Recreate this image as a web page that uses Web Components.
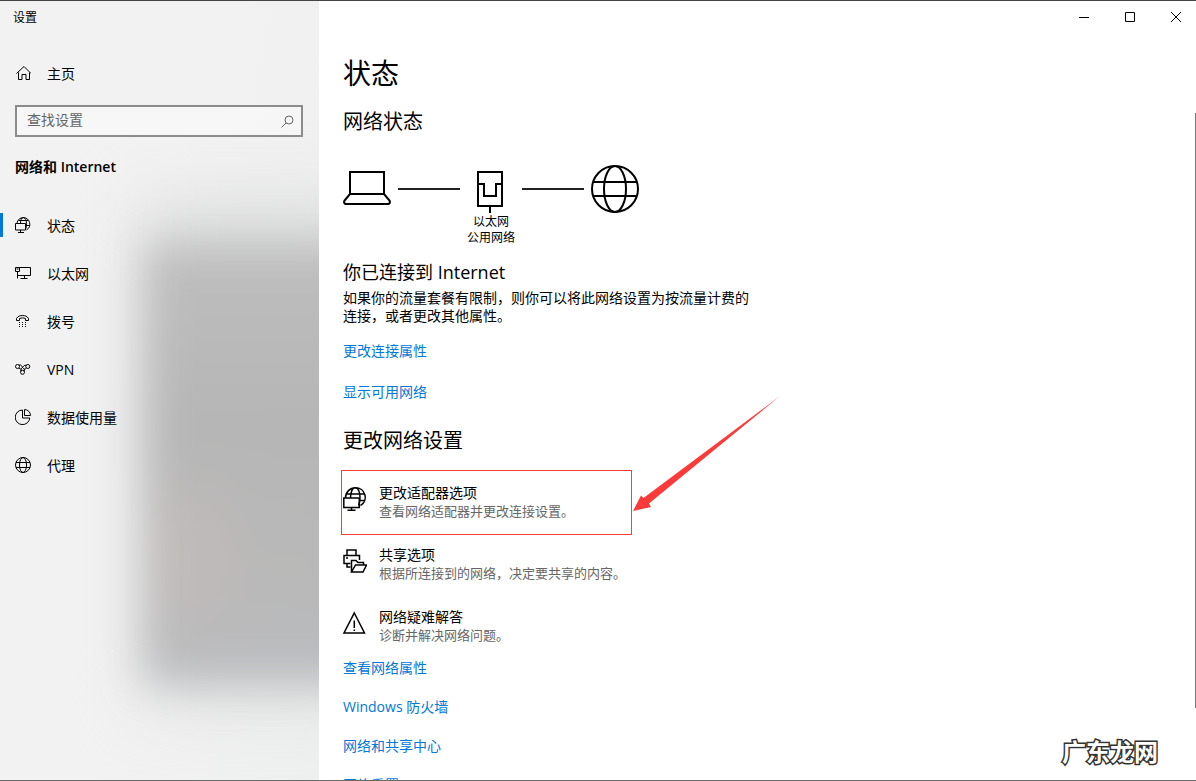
<!DOCTYPE html>
<html lang="zh-CN">
<head>
  <meta charset="UTF-8">
  <meta name="viewport" content="width=device-width, initial-scale=1.0">
  <title>设置</title>
  <style>
    html, body {
      margin: 0;
      height: 100%;
    }
    body {
      font-family: "Open Sans", "Noto Sans CJK SC", sans-serif;
      font-size: 14px;
      line-height: 20px;
      color: #000;
      background: #fff;
      overflow: hidden;
    }
  </style>
</head>
<body>
  <settings-window>
    <side-bar slot="side">
      <span slot="title">设置</span>
      <nav-item slot="home" icon="home">主页</nav-item>
      <search-box slot="search" label="查找设置"></search-box>
      <span slot="heading">网络和 Internet</span>
      <nav-item icon="status" active>状态</nav-item>
      <nav-item icon="ethernet">以太网</nav-item>
      <nav-item icon="dialup">拨号</nav-item>
      <nav-item icon="vpn">VPN</nav-item>
      <nav-item icon="usage">数据使用量</nav-item>
      <nav-item icon="globe">代理</nav-item>
    </side-bar>
    <status-page></status-page>
  </settings-window>

  <script>
    const icons = {
      home: [16, '<path d="M1.500 8.500 9 1.500l7 7M3.500 7.500v7h3.500v-5h4v5h3.500v-7"/>'],
      status: [16, '<path d="M2 6C2.500 3 5 .6 8.300.6a6.600 6.600 0 0 1 3.200 12.300M3.500 3.500h9.800M10.500 8.500h4.300M5.500 6C5.500 3 6.500.6 8.300.6S11.500 3 11.500 6.500c0 2.500-.3 4-1 6"/><path d="M.5 6.500h10v6.500H.5zM5.500 13v2.500M3 15.500h6"/>'],
      ethernet: [16, '<path d="M4.500 2.500h11v8H2.500M.5 2.500h4v4h-4zM1.500 4h2M2.500 6.500v7M9.500 10.500v3M5.500 13.500h7"/>'],
      dialup: [16, '<path d="M1.500 7.500v-2C3 3 5 2.500 7.500 2.500S12 3 13.500 5.500v2h-3v-2c-2-.8-4-.8-6 0v2z"/><path d="M4 9.500h1M7 9.500h1M10 9.500h1M4 11.500h1M7 11.500h1M10 11.500h1M4 13.500h1M7 13.500h1M10 13.500h1"/>'],
      vpn: [16, '<circle cx="2.500" cy="5.500" r="2"/><circle cx="12.800" cy="5.500" r="2"/><circle cx="7.500" cy="11.300" r="2"/><path d="M4 4.200c1.500-.8 2.300 0 3 1.300S8.500 8 9.500 8s1.800-.5 2-1M4 7c1 1.500 2 1 3 0s2-3.200 4.300-2.800M5.700 10.500c-.4-1.500.3-2 1.300-3M9.300 10.500c.3-1 .2-1.500 0-2.500"/>'],
      usage: [16, '<path d="M7.500 1A7.300 7.300 0 1 0 14.800 9H7.500z"/><path d="M9.500.5v6h6a6 6 0 0 0-6-6z"/>'],
      globe: [16, '<circle cx="8" cy="8" r="7.500"/><ellipse cx="8" cy="8" rx="3.500" ry="7.500"/><path d="M1 5.500h14M1 10.500h14"/>'],
      search: [13, '<circle cx="8" cy="5" r="4"/><path d="M5 8 .5 12.500"/>'],
      adapter: [24, '<path d="M2.500 11C2.500 5 7 .8 12.500.8a9.500 9.500 0 0 1 5 17.700M3.500 7h18M16 13.500h5.500M7.500 11C7.500 5 9.500.8 12.300.8S17 5 17 10c0 3.500-.3 6-1.500 8.500"/><path d="M.8 11h15.500v9.500H.8zM8.500 20.500v3M4.500 23.200h8"/>'],
      share: [24, '<path d="M4 6.500V1h9v5.500M7.500 14.500H1v-8h15.500V11M4 14.500V18h3.500M3 9h2"/><path d="M8.500 23V11.500H13l2 2h5.500V16M8.500 23l4-7h11l-3.500 7z"/>'],
      warning: [24, '<path d="M11.300 2 21.500 22H1z"/><path d="M11.300 9.500V17M11.300 18.500V20"/>'],
      laptop: [48, '<path d="M7 7h34v22H7zM7 29l-5.500 6.500c-1 2 0 3.500 1.500 3.500h42c1.500 0 2.500-1.500 1.500-3.500L41 29"/>'],
      port: [48, '<path d="M11 7h24v34H11zM11 19h6v12h12V19h6M23 41v7"/>'],
      world: [48, '<circle cx="24" cy="24" r="23"/><ellipse cx="24" cy="24" rx="11" ry="23"/><path d="M2 17h44M2 31h44"/>'],
      minimize: [10, '<path d="M0 5.500h10"/>'],
      maximize: [10, '<path d="M.5.5h9v9h-9z"/>'],
      close: [10, '<path d="m0 0 10 10M10 0 0 10"/>']
    };

    function icon(name, stroke = 1) {
      const [size, body] = icons[name];
      return `<svg width="${size}" height="${size}" viewBox="0 0 ${size} ${size}" fill="none"
        stroke="currentColor" stroke-width="${stroke}" aria-hidden="true">${body}</svg>`;
    }

    class SettingsWindow extends HTMLElement {
      connectedCallback() {
        this.attachShadow({ mode: 'open' });
        this.shadowRoot.innerHTML = `
          <style>
            :host {
              display: flex;
              position: relative;
              box-sizing: border-box;
              height: 100vh;
              border-top: 1px solid #444;
              border-bottom: 1px solid #6a6a6a;
              overflow: hidden;
            }
            .content {
              flex: 1;
              min-width: 0;
              display: flex;
              flex-direction: column;
            }
            .thumb {
              position: absolute;
              right: 0;
              top: 112px;
              bottom: 72px;
              width: 1px;
              background: #777;
            }
            .mark {
              position: absolute;
              right: 38px;
              bottom: 12px;
              font-size: 24px;
              line-height: 32px;
              font-weight: 700;
              color: #fff;
              -webkit-text-stroke: 3px #333;
              paint-order: stroke fill;
              stroke-linejoin: round;
            }
          </style>
          <slot name="side"></slot>
          <div class="content">
            <caption-bar></caption-bar>
            <slot></slot>
          </div>
          <div class="thumb"></div>
          <div class="mark">广东龙网</div>
        `;
      }
    }

    class CaptionBar extends HTMLElement {
      connectedCallback() {
        this.attachShadow({ mode: 'open' });
        this.shadowRoot.innerHTML = `
          <style>
            :host {
              display: flex;
              justify-content: flex-end;
              height: 32px;
              flex: none;
            }
            button {
              display: flex;
              align-items: center;
              justify-content: center;
              width: 46px;
              padding: 0 0 0 6px;
              border: 0;
              background: none;
              color: #000;
            }
            button:hover { background: #e5e5e5; }
          </style>
          <button aria-label="最小化">${icon('minimize')}</button>
          <button aria-label="最大化">${icon('maximize')}</button>
          <button aria-label="关闭">${icon('close')}</button>
        `;
      }
    }

    class SideBar extends HTMLElement {
      connectedCallback() {
        this.attachShadow({ mode: 'open' });
        this.shadowRoot.innerHTML = `
          <style>
            :host {
              display: block;
              position: relative;
              z-index: 0;
              flex: none;
              width: 319px;
              overflow: hidden;
              background: linear-gradient(100deg, #f2f2f2 50%, #eeefef);
            }
            /* dark window showing through the acrylic */
            :host::before {
              content: '';
              position: absolute;
              z-index: -1;
              left: 146px;
              right: -80px;
              top: 244px;
              bottom: 98px;
              filter: blur(20px);
              background:
                radial-gradient(80px 110px at 40px 310px, #c1bbb9, transparent),
                linear-gradient(#bebebe, #b6b6b6 40%, #b9b9b9 80%, #babcc0);
            }
            :host::after {
              content: '';
              position: absolute;
              z-index: -2;
              left: 140px;
              right: -60px;
              top: 200px;
              bottom: 80px;
              filter: blur(32px);
              background: #dcdddd;
            }
            .title {
              padding: 0 13px;
              font-size: 12px;
              line-height: 34px;
              height: 32px;
            }
            .home { padding-top: 16px; }
            .search { padding: 8px 16px 0 15px; }
            h2 {
              margin: 20px 15px 24px;
              font-size: 14px;
              line-height: 20px;
              font-weight: 600;
            }
          </style>
          <div class="title"><slot name="title"></slot></div>
          <div class="home"><slot name="home"></slot></div>
          <div class="search"><slot name="search"></slot></div>
          <h2><slot name="heading"></slot></h2>
          <nav><slot></slot></nav>
        `;
      }
    }

    class NavItem extends HTMLElement {
      connectedCallback() {
        this.attachShadow({ mode: 'open' });
        this.shadowRoot.innerHTML = `
          <style>
            :host { display: block; }
            a {
              display: flex;
              align-items: center;
              height: 48px;
              line-height: 22px;
              color: inherit;
              text-decoration: none;
            }
            a::before {
              content: '';
              width: 3px;
              height: 24px;
              margin-right: 12px;
            }
            :host([active]) a::before { background: #0078d7; }
            svg { margin-right: 16px; }
            span { padding-top: 2px; }
          </style>
          <a href="#">${icon(this.getAttribute('icon'))}<span><slot></slot></span></a>
        `;
      }
    }

    class SearchBox extends HTMLElement {
      connectedCallback() {
        const label = this.getAttribute('label');
        this.attachShadow({ mode: 'open' });
        this.shadowRoot.innerHTML = `
          <style>
            :host {
              display: flex;
              align-items: center;
              box-sizing: border-box;
              height: 32px;
              padding: 0 7px 0 10px;
              border: 2px solid #8c8c8c;
              background: rgba(255, 255, 255, 0.4);
              color: #666;
            }
            input {
              flex: 1;
              min-width: 0;
              padding: 0 0 2px;
              border: 0;
              outline: 0;
              background: none;
              font: inherit;
            }
            input::placeholder { color: #666; opacity: 1; }
          </style>
          <input type="text" placeholder="${label}" aria-label="${label}">
          ${icon('search')}
        `;
      }
    }

    class ActionLink extends HTMLElement {
      connectedCallback() {
        this.attachShadow({ mode: 'open' });
        this.shadowRoot.innerHTML = `
          <style>
            :host { display: block; }
            a { color: #0078d7; text-decoration: none; }
            a:hover { color: #666; }
          </style>
          <a href="#"><slot></slot></a>
        `;
      }
    }

    class NetworkMap extends HTMLElement {
      connectedCallback() {
        this.attachShadow({ mode: 'open' });
        this.shadowRoot.innerHTML = `
          <style>
            :host {
              display: flex;
              align-items: flex-start;
              gap: 7px;
            }
            svg { display: block; }
            hr {
              width: 62px;
              margin: 23px 0 0;
              border: 0;
              border-top: 2px solid #222;
            }
            .node {
              font-size: 12px;
              line-height: 16px;
              text-align: center;
            }
            .node svg { margin-bottom: 1px; }
          </style>
          ${icon('laptop', 2)}
          <hr>
          <div class="node">${icon('port', 2)}<slot></slot></div>
          <hr>
          ${icon('world', 2)}
        `;
      }
    }

    class SettingItem extends HTMLElement {
      connectedCallback() {
        this.attachShadow({ mode: 'open' });
        this.shadowRoot.innerHTML = `
          <style>
            :host {
              display: block;
              position: relative;
            }
            a {
              display: flex;
              gap: 12px;
              padding: 13px 0;
              line-height: 18px;
              color: inherit;
              text-decoration: none;
            }
            svg {
              flex: none;
              margin-top: 3px;
            }
            .note {
              font-size: 13px;
              color: #666;
            }
          </style>
          <a href="#">
            ${icon(this.getAttribute('icon'), 1.5)}
            <div>
              <div><slot></slot></div>
              <div class="note"><slot name="note"></slot></div>
            </div>
          </a>
          <slot name="callout"></slot>
        `;
      }
    }

    /* red frame and arrow drawn over an item */
    class CallOut extends HTMLElement {
      connectedCallback() {
        this.attachShadow({ mode: 'open' });
        this.shadowRoot.innerHTML = `
          <style>
            :host {
              position: absolute;
              left: -2px;
              top: -1px;
              width: 289px;
              height: 63px;
              border: 1px solid #fc3a3a;
              pointer-events: none;
            }
            svg {
              position: absolute;
              left: 100%;
              bottom: 22px;
            }
          </style>
          <svg width="150" height="116" viewBox="0 0 150 116" fill="#fc3a3a" aria-hidden="true">
            <path d="M2 115 10 99.500l2.500 2.500L149 0 18 107.500l2 3.500z"/>
          </svg>
        `;
      }
    }

    class StatusPage extends HTMLElement {
      connectedCallback() {
        this.attachShadow({ mode: 'open' });
        this.shadowRoot.innerHTML = `
          <style>
            :host {
              display: block;
              padding: 20px 24px 0;
            }
            h1, h2, h3, p { margin: 0; font-weight: 400; }
            h1 { font-size: 28px; line-height: 40px; }
            h2 { font-size: 20px; line-height: 28px; }
            h3 { margin-top: 14px; font-size: 18px; line-height: 24px; }
            .state { margin-top: 15px; }
            network-map { margin-top: 29px; }
            p {
              max-width: 408px;
              margin: 5px 0 16px;
              line-height: 18px;
            }
            .change { margin: 25px 0 16px; }
            .near, .links {
              display: flex;
              flex-direction: column;
              align-items: flex-start;
              gap: 21px;
            }
            .links { gap: 19px; margin-top: 1px; }
          </style>
          <h1>状态</h1>
          <h2 class="state">网络状态</h2>
          <network-map>以太网<br>公用网络</network-map>
          <h3>你已连接到 Internet</h3>
          <p>如果你的流量套餐有限制，则你可以将此网络设置为按流量计费的连接，或者更改其他属性。</p>
          <div class="near">
            <action-link>更改连接属性</action-link>
            <action-link>显示可用网络</action-link>
          </div>
          <h2 class="change">更改网络设置</h2>
          <setting-item icon="adapter">更改适配器选项
            <span slot="note">查看网络适配器并更改连接设置。</span>
            <call-out slot="callout"></call-out>
          </setting-item>
          <setting-item icon="share">共享选项
            <span slot="note">根据所连接到的网络，决定要共享的内容。</span>
          </setting-item>
          <setting-item icon="warning">网络疑难解答
            <span slot="note">诊断并解决网络问题。</span>
          </setting-item>
          <div class="links">
            <action-link>查看网络属性</action-link>
            <action-link>Windows 防火墙</action-link>
            <action-link>网络和共享中心</action-link>
            <action-link>网络重置</action-link>
          </div>
        `;
      }
    }

    customElements.define('settings-window', SettingsWindow);
    customElements.define('caption-bar', CaptionBar);
    customElements.define('side-bar', SideBar);
    customElements.define('nav-item', NavItem);
    customElements.define('search-box', SearchBox);
    customElements.define('action-link', ActionLink);
    customElements.define('network-map', NetworkMap);
    customElements.define('setting-item', SettingItem);
    customElements.define('call-out', CallOut);
    customElements.define('status-page', StatusPage);
  </script>
</body>
</html>
